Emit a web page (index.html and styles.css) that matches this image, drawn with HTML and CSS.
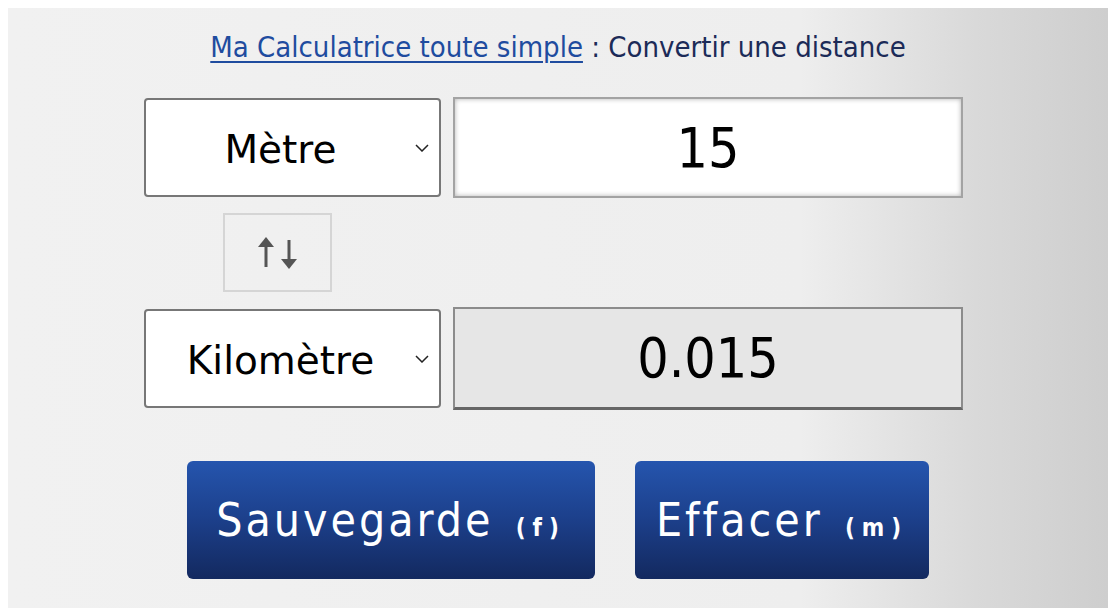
FILE: index.html
```html
<!DOCTYPE html>
<html lang="fr">
<head>
  <meta charset="UTF-8">
  <title>Convertir une distance</title>
  <link rel="stylesheet" href="styles.css">
</head>
<body>

<div class="calc">
  <h1 class="calc-title"><a href="#">Ma Calculatrice toute simple</a> : Convertir une distance</h1>

  <div class="converter">
    <div class="row row-from">
      <select class="unit" id="unitFrom">
        <option value="1">Mètre</option>
        <option value="1000">Kilomètre</option>
      </select>
      <input class="value" id="valueFrom" type="text" value="15">
    </div>

    <button class="swap" type="button" id="swap" title="Inverser">
      <svg width="45" height="36" viewBox="0 0 45 36">
        <rect x="9.5" y="10" width="3" height="22" fill="#555"/>
        <polygon points="11,2 3,12 19,12" fill="#555"/>
        <rect x="32.5" y="5" width="3" height="21" fill="#555"/>
        <polygon points="26,24 42,24 34,34" fill="#555"/>
      </svg>
    </button>

    <div class="row row-to">
      <select class="unit" id="unitTo">
        <option value="1">Mètre</option>
        <option value="1000" selected>Kilomètre</option>
      </select>
      <input class="value result" id="valueTo" type="text" value="0.015" readonly>
    </div>
  </div>

  <div class="actions">
    <button class="btn btn-save" type="button">Sauvegarde <span class="key">(f)</span></button>
    <button class="btn btn-clear" type="button">Effacer <span class="key">(m)</span></button>
  </div>
</div>

<script>
  const from = document.getElementById("valueFrom");
  const to = document.getElementById("valueTo");
  const unitFrom = document.getElementById("unitFrom");
  const unitTo = document.getElementById("unitTo");

  function convert() {
    const v = parseFloat(from.value.replace(",", "."));
    if (isNaN(v)) { to.value = ""; return; }
    const r = v * unitFrom.value / unitTo.value;
    to.value = +r.toPrecision(12);
  }

  from.addEventListener("input", convert);
  unitFrom.addEventListener("change", convert);
  unitTo.addEventListener("change", convert);

  document.getElementById("swap").addEventListener("click", function() {
    const u = unitFrom.value;
    unitFrom.value = unitTo.value;
    unitTo.value = u;
    convert();
  });

  document.querySelector(".btn-clear").addEventListener("click", function() {
    from.value = "";
    to.value = "";
  });
</script>

</body>
</html>
```

FILE: styles.css
```css
body {
  margin: 8px;
  background: #fff;
}
.calc {
  width: 1100px;
  height: 600px;
  box-sizing: border-box;
  padding-top: 19px;
  background: linear-gradient(to right, #f1f1f1 0%, #eeeeee 72%, #d9d9d9 88%, #cecece 100%);
}
.calc-title {
  margin: 0;
  text-align: center;
  font-family: "DejaVu Sans Condensed", "DejaVu Sans", sans-serif;
  font-stretch: condensed;
  font-weight: normal;
  font-size: 29px;
  line-height: 40px;
  color: #1c2b58;
}
.calc-title a {
  color: #1f4c9f;
  text-decoration-thickness: 2px;
  text-underline-offset: 4px;
}
.converter {
  margin-top: 30px;
  padding-left: 136px;
}
.row {
  display: flex;
  align-items: center;
  gap: 12px;
}
.unit {
  appearance: none;
  width: 297px;
  height: 99px;
  box-sizing: border-box;
  padding: 4px 24px 0 0;
  border: 2px solid #777;
  border-radius: 4px;
  background: #fff url("data:image/svg+xml,%3Csvg xmlns='http://www.w3.org/2000/svg' width='14' height='8'%3E%3Cpath d='M1 1l6 6 6-6' fill='none' stroke='%23222' stroke-width='1.5'/%3E%3C/svg%3E") no-repeat right 10px center;
  font-family: "DejaVu Sans", Verdana, sans-serif;
  font-size: 39px;
  color: #000;
  text-align: center;
  text-align-last: center;
}
.value {
  width: 510px;
  height: 101px;
  box-sizing: border-box;
  border: 2px solid #a3a3a3;
  background: #fff;
  box-shadow: inset 0 0 5px rgba(0, 0, 0, 0.3);
  font-family: "DejaVu Sans Condensed", "DejaVu Sans", sans-serif;
  font-stretch: condensed;
  font-size: 55px;
  text-align: center;
  color: #000;
  outline: none;
}
.result {
  height: 103px;
  background: #e6e6e6;
  border-color: #8c8c8c;
  border-bottom: 3px solid #666;
  box-shadow: none;
}
.swap {
  display: flex;
  align-items: center;
  justify-content: center;
  width: 109px;
  height: 79px;
  margin: 15px 0 15px 79px;
  padding: 0;
  background: transparent;
  border: 2px solid #d5d5d5;
  cursor: pointer;
}
.actions {
  display: flex;
  justify-content: center;
  gap: 40px;
  margin-top: 51px;
}
.btn {
  height: 118px;
  border: none;
  border-radius: 6px;
  background: linear-gradient(to bottom, #2555ae 0%, #1c3f8a 50%, #13295f 100%);
  color: #fff;
  font-family: "DejaVu Sans Condensed", "DejaVu Sans", sans-serif;
  font-stretch: condensed;
  font-size: 46px;
  letter-spacing: 3px;
  cursor: pointer;
}
.btn-save {
  width: 408px;
}
.btn-clear {
  width: 294px;
}
.key {
  font-size: 24px;
  font-weight: bold;
  letter-spacing: 7px;
  margin-left: 6px;
}
```
